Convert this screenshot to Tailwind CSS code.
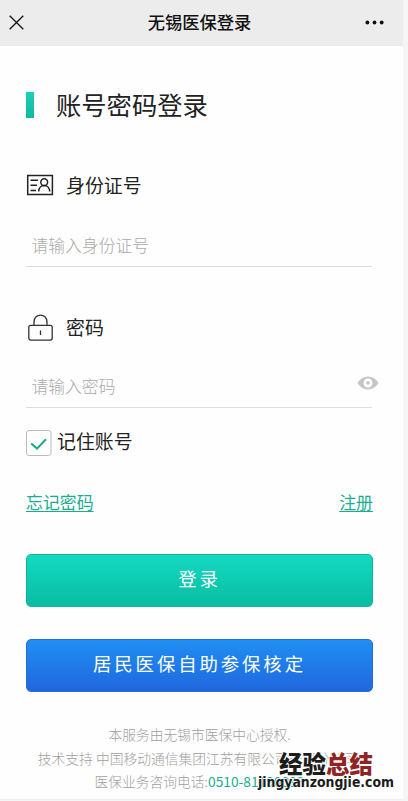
<!DOCTYPE html>
<html lang="zh-CN">
<head>
<meta charset="utf-8">
<title>无锡医保登录</title>
<script src="https://cdn.jsdelivr.net/npm/@tailwindcss/browser@4"></script>
</head>
<body class="h-[801px] w-[408px] overflow-hidden bg-[#f5f5f5] font-['Noto_Sans_CJK_SC',sans-serif] text-[#222]">
<div class="relative h-[800px] w-[403px] overflow-hidden bg-[#fefefe]">
  <header class="flex h-[46px] items-center justify-between bg-[#ececec] pr-[19px] pl-[9px]">
    <svg class="-mt-[2px] h-[15px] w-[15px]" viewBox="0 0 15 15" fill="none" stroke="#111" stroke-width="1.3"><path d="M.7.7 14.3 14.3M14.3.7.7 14.3"/></svg>
    <h1 class="-mt-[2px] ml-[10px] text-[17.3px] leading-6 font-medium text-[#111]">无锡医保登录</h1>
    <svg class="-mt-[2px] h-[5px] w-[19px]" viewBox="0 0 19 5" fill="#111"><circle cx="2.4" cy="2.5" r="1.9"/><circle cx="9.5" cy="2.5" r="1.9"/><circle cx="16.7" cy="2.5" r="1.9"/></svg>
  </header>
  <main class="pr-[30px] pl-[26px]">
    <div class="flex h-[118px] items-center">
      <span class="mr-[22px] h-[26px] w-[8px] bg-gradient-to-b from-[#1ad0b8] to-[#10b99e]"></span>
      <h2 class="-mt-[2px] text-[25.3px] leading-[38px]">账号密码登录</h2>
    </div>
    <label class="flex h-[42px] items-center">
      <svg class="mr-[12px] h-[22px] w-[28px]" viewBox="0 0 28 22" fill="none" stroke="#222" stroke-width="1.5"><path d="M1.7 1.6H26.4V20.6H1.7Z M4.5 6.3H12 M4.5 11.3H11 M4.5 16.5H10"/><circle cx="18.2" cy="8.2" r="3.4"/><path d="M12.7 17.5C12.9 9.6 23.5 9.6 23.7 17.5"/></svg>
      <span class="text-[18.9px] leading-7">身份证号</span>
    </label>
    <div class="flex h-[61px] w-[346px] items-center border-b border-[#dcdcdc] pt-[18px] pl-[5.5px] text-[16.8px] leading-6 font-light text-[#aaa]">请输入身份证号</div>
    <label class="flex h-[80px] items-end pb-[6px]">
      <svg class="mr-[12px] mb-[-1px] ml-[2px] h-[28px] w-[26px]" viewBox="0 0 26 28" fill="none" stroke="#333" stroke-width="1.3"><rect x=".8" y="11.3" width="23.4" height="14.8" rx="2"/><path d="M6 11V8C6 -1.3 19 -1.3 19 8V11M12.5 16.5V21"/></svg>
      <span class="text-[18.9px] leading-7">密码</span>
    </label>
    <div class="flex h-[61px] w-[346px] items-center border-b border-[#dcdcdc] pt-[18px] pl-[5.5px] text-[16.8px] leading-6 font-light text-[#aaa]">请输入密码
      <svg class="-mt-[6px] -mr-[7px] ml-auto h-[14px] w-[22px]" viewBox="0 0 22 14"><path d="M.4 7C6-1.7 16-1.7 21.6 7C16 15.7 6 15.7 .4 7Z" fill="#c5c5c5"/><circle cx="11" cy="7" r="4.5" fill="#fff"/><circle cx="11" cy="7" r="1.8" fill="#c5c5c5"/></svg>
    </div>
    <div class="flex h-[68px] items-center pt-px">
      <svg class="mr-[5px] h-[26px] w-[26px]" viewBox="0 0 26 26" fill="none"><rect x=".5" y=".5" width="24.5" height="25" rx="2.5" stroke="#bcbcbc"/><path d="M5.2 13.5 11 18.6 20 9.2" stroke="#1aad85" stroke-width="2"/></svg>
      <span class="-mt-[3px] text-[18.9px] leading-7">记住账号</span>
    </div>
    <div class="flex h-[52px] items-center justify-between text-[16.9px] leading-6 text-[#1aae91]">
      <a class="underline decoration-1 underline-offset-2">忘记密码</a><a class="underline decoration-1 underline-offset-2">注册</a>
    </div>
    <button class="mt-[26px] flex h-[53px] w-[347px] items-center justify-center rounded-[5px] border border-[#12b59a] bg-gradient-to-b from-[#13d9c2] to-[#08bda2] pb-[5px] text-[18.4px] leading-7 tracking-[2.9px] text-white">登录</button>
    <button class="mt-[32px] flex h-[53px] w-[347px] items-center justify-center rounded-[5px] border border-[#246fd0] bg-gradient-to-b from-[#208ff3] to-[#2167df] pb-[5px] text-[18.4px] leading-7 tracking-[2.9px] text-white">居民医保自助参保核定</button>
  </main>
  <footer class="mt-[31px] text-center text-[13.75px] leading-[23.5px] font-light whitespace-nowrap text-[#a0a0a0]">
    <p class="pr-[4px]">本服务由无锡市医保中心授权.</p>
    <p class="pr-[8px]">技术支持 中国移动通信集团江苏有限公司无锡分公司</p>
    <p class="pr-[4px]">医保业务咨询电话:<span class="font-normal text-[#1aae91]">0510-81190093</span></p>
    <p class="pl-[101px] text-left">技术支持咨询电话:</p>
  </footer>
  <div class="absolute inset-x-0 bottom-0 h-px bg-[#eee]"></div>
</div>
<svg class="absolute top-[749px] left-[254px] h-[48px] w-[148px]" viewBox="0 0 148 48" stroke="#fff" stroke-width="2" stroke-linejoin="round" paint-order="stroke" fill="#1c1c1c">
  <text class="font-['Noto_Sans_CJK_SC',sans-serif] text-[23.5px] font-black" x="25" y="24" textLength="94">经验<tspan fill="#8f2424">总结</tspan></text>
  <text class="font-['DejaVu_Sans',sans-serif] text-[13.5px] font-bold" x="4" y="38" textLength="136" lengthAdjust="spacingAndGlyphs" stroke-width="1.5">jingyanzongjie.com</text>
</svg>
</body>
</html>
